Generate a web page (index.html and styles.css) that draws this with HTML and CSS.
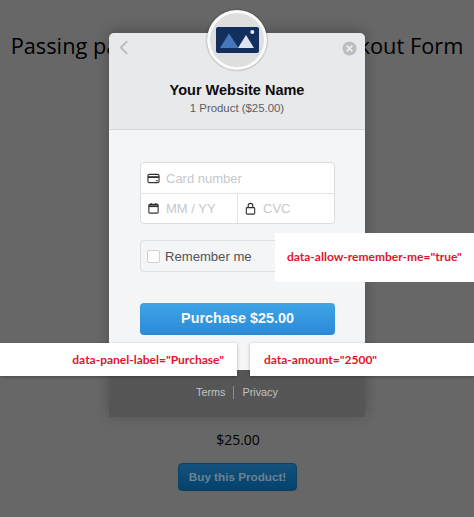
FILE: index.html
```html
<!DOCTYPE html>
<html lang="en">
<head>
<meta charset="utf-8">
<title>Checkout Form</title>
<link rel="stylesheet" href="styles.css">
</head>
<body>
<main class="page">
  <h1 class="page-title">Passing parameters to Stripe Checkout Form</h1>
  <p class="page-price">$25.00</p>
  <button class="buy-button" type="button">Buy this Product!</button>
</main>

<section class="modal">
  <header class="modal-head">
    <svg class="back" viewBox="0 0 10 16" aria-hidden="true"><path d="M8 2 2 8l6 6" fill="none" stroke="#b9bbbe" stroke-width="1.8"/></svg>
    <svg class="close" viewBox="0 0 16 16" aria-hidden="true"><circle cx="8" cy="8" r="7.5" fill="#bcbdbf"/><path d="m5 5 6 6m0-6-6 6" stroke="#eceded" stroke-width="2"/></svg>
    <h2 class="site-name">Your Website Name</h2>
    <p class="site-desc">1 Product ($25.00)</p>
  </header>
  <div class="modal-body">
    <div class="card-fields">
      <div class="field">
        <svg class="field-icon" viewBox="0 0 14 14" aria-hidden="true"><rect x="1" y="2.500" width="12" height="9" rx="1.500" fill="none" stroke="#333" stroke-width="1.200"/><path d="M1 5.500h12" stroke="#333" stroke-width="2"/><path d="M9.500 9.500H12" stroke="#333"/></svg>
        <span>Card number</span>
      </div>
      <div class="field-row">
        <div class="field">
          <svg class="field-icon" viewBox="0 0 14 14" aria-hidden="true"><rect x="2" y="2.500" width="10" height="9.500" rx="1" fill="none" stroke="#333" stroke-width="1.200"/><path d="M2 4.500h10" stroke="#333" stroke-width="2"/><path d="M4.500 1v2M9.500 1v2" stroke="#333" stroke-width="1.200"/></svg>
          <span>MM / YY</span>
        </div>
        <div class="field">
          <svg class="field-icon" viewBox="0 0 14 14" aria-hidden="true"><rect x="2.500" y="6" width="9" height="7" rx="1" fill="none" stroke="#333" stroke-width="1.200"/><path d="M4.500 6V4a2.500 2.500 0 0 1 5 0v2" fill="none" stroke="#333" stroke-width="1.200"/></svg>
          <span>CVC</span>
        </div>
      </div>
    </div>
    <label class="remember"><span class="checkbox"></span>Remember me</label>
    <button class="purchase" type="button">Purchase $25.00</button>
  </div>
  <footer class="modal-foot">
    <span class="foot-link">Terms</span>
    <span class="foot-sep"></span>
    <span class="foot-link">Privacy</span>
  </footer>
  <div class="logo">
    <svg viewBox="0 0 43 26" aria-hidden="true">
      <rect width="43" height="26" rx="2" fill="#132f5e"/>
      <path d="M4 21 13 6.500 22.500 21z" fill="#4477bb"/>
      <path d="M22 21 30 8 38 21z" fill="#dde4f0"/>
      <circle cx="36.300" cy="5" r="2" fill="#e6ebf3"/>
    </svg>
  </div>
</section>

<div class="note note-remember">data-allow-remember-me="true"</div>
<div class="note note-label">data-panel-label="Purchase"</div>
<div class="note note-amount">data-amount="2500"</div>
</body>
</html>
```
FILE: styles.css
```css
* { box-sizing: border-box; }
html, body { margin: 0; height: 100%; }
body {
  position: relative;
  width: 474px;
  height: 517px;
  overflow: hidden;
  background: #676767;
  font-family: "Liberation Sans", Arial, sans-serif;
}
.page {
  display: flex;
  flex-direction: column;
  align-items: center;
  padding-top: 30px;
}
.page-title {
  margin: 0;
  font: 400 21.800px/32px "Open Sans", sans-serif;
  color: #000;
  white-space: nowrap;
}
.page-price {
  margin: 368px 0 0;
  padding-left: 2px;
  font: 400 14px/20px "Open Sans", sans-serif;
  color: #000;
}
.buy-button {
  margin-top: 13px;
  margin-left: 1px;
  width: 119px;
  height: 28px;
  padding: 0;
  border: 1px solid #0d4266;
  border-radius: 4px;
  background: linear-gradient(#13527a, #06426c);
  color: #6b8295;
  font: 700 11.700px/1 "Liberation Sans", Arial, sans-serif;
}
.modal {
  position: absolute;
  left: 109px;
  top: 33px;
  width: 256px;
  height: 384px;
  display: flex;
  flex-direction: column;
  border-radius: 5px 5px 0 0;
  box-shadow: 0 -2px 14px rgba(0, 0, 0, .25);
}
.modal-head {
  position: relative;
  height: 97px;
  padding-top: 47px;
  background: #e8e9eb;
  border-bottom: 1px solid #d6d7d9;
  border-radius: 5px 5px 0 0;
  text-align: center;
}
.back {
  position: absolute;
  left: 9px;
  top: 6px;
  width: 12px;
  height: 17px;
}
.close {
  position: absolute;
  right: 8px;
  top: 8px;
  width: 15px;
  height: 15px;
}
.site-name {
  margin: 0;
  font: 700 14.500px/20px "Liberation Sans", Arial, sans-serif;
  color: #0d0d0f;
}
.site-desc {
  margin: 0;
  font: 400 11.400px/17px "Liberation Sans", Arial, sans-serif;
  color: #5d5f63;
}
.modal-body {
  display: flex;
  flex-direction: column;
  height: 240px;
  padding: 32px 31px 0;
  background: #f4f5f7;
}
.card-fields {
  width: 195px;
  height: 62px;
  display: flex;
  flex-direction: column;
  background: #fff;
  border: 1px solid #dcdde0;
  border-radius: 4px;
}
.field {
  flex: 1;
  display: flex;
  align-items: center;
  gap: 6px;
  padding: 1px 0 0 6px;
  font-size: 13px;
  color: #c6c8cc;
}
.field-row {
  flex: 1;
  display: flex;
  border-top: 1px solid #e3e4e6;
}
.field-row .field {
  padding-top: 0;
}
.field-row .field + .field {
  border-left: 1px solid #e3e4e6;
}
.field-icon {
  width: 13px;
  height: 13px;
  flex: none;
}
.remember {
  display: flex;
  align-items: center;
  gap: 5px;
  width: 195px;
  height: 32px;
  margin-top: 16px;
  padding-left: 6px;
  border: 1px solid #dcdde0;
  border-radius: 4px;
  font-size: 13.100px;
  color: #505256;
}
.checkbox {
  width: 13px;
  height: 13px;
  background: #fff;
  border: 1px solid #cfd0d3;
  border-radius: 2px;
}
.purchase {
  width: 195px;
  height: 32px;
  margin-top: 31px;
  padding: 0 0 2px;
  border: 0;
  border-radius: 4px;
  background: linear-gradient(#3da5e6, #2c89d6);
  color: #f4f8fc;
  font: 700 14.400px/1 "Liberation Sans", Arial, sans-serif;
}
.modal-foot {
  flex: 1;
  display: flex;
  align-items: center;
  justify-content: center;
  gap: 8px;
  padding-bottom: 3px;
  background: #565656;
}
.foot-link {
  font-size: 10.800px;
  color: #c2c2c2;
}
.foot-sep {
  width: 1px;
  height: 13px;
  background: #8e8e8e;
}
.logo {
  position: absolute;
  left: 98px;
  top: -23px;
  width: 60px;
  height: 60px;
  display: flex;
  align-items: center;
  justify-content: center;
  background: #dedede;
  border: 3px solid #fafafa;
  border-radius: 50%;
  box-shadow: 0 0 2px rgba(0, 0, 0, .5);
}
.logo svg {
  width: 43px;
  height: 26px;
  flex: none;
}
.note {
  position: absolute;
  display: flex;
  align-items: center;
  background: #fff;
  font: 700 12px/1 Lato, sans-serif;
  color: #e2142d;
  white-space: nowrap;
}
.note-remember {
  left: 275px;
  top: 233px;
  width: 199px;
  height: 49px;
  padding: 0 0 1px 12px;
}
.note-label {
  left: 0;
  top: 343px;
  width: 237px;
  height: 33px;
  justify-content: flex-end;
  padding: 1px 13px 0 0;
  box-shadow: 0 1px 3px rgba(0, 0, 0, .3);
}
.note-amount {
  left: 250px;
  top: 343px;
  width: 224px;
  height: 33px;
  padding: 1px 0 0 14px;
  box-shadow: 0 1px 3px rgba(0, 0, 0, .3);
}
```
